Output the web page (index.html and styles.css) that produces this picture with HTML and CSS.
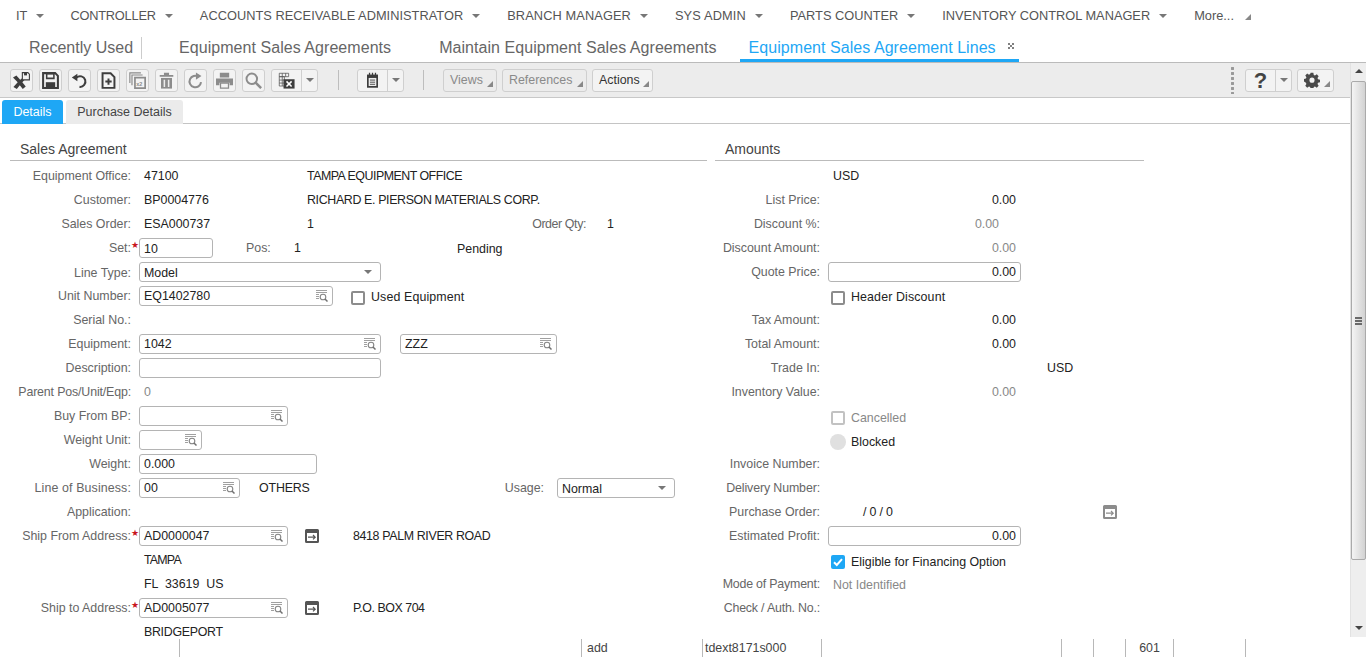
FILE: index.html
```html
<!DOCTYPE html>
<html lang="en">
<head>
<meta charset="utf-8">
<title>Equipment Sales Agreement Lines</title>
<link rel="stylesheet" href="styles.css">
</head>
<body>
<svg class="defs" aria-hidden="true">
  <symbol id="lookup" viewBox="0 0 12 12">
    <path d="M0 .5h11M0 2.500h11M0 4.500h3M0 6.500h3M0 8.500h3" fill="none" stroke="#a0a0a0"/>
    <circle cx="7" cy="7" r="2.800" fill="#fff" stroke="#858585" stroke-width="1.100"/>
    <path d="M9 9l2.500 2.500" stroke="#707070" stroke-width="1.500"/>
  </symbol>
  <symbol id="jump" viewBox="0 0 14 14">
    <path d="M1.500 0h11A1.500 1.500 0 0 1 14 1.500v11a1.500 1.500 0 0 1-1.500 1.500h-11A1.500 1.500 0 0 1 0 12.500v-11A1.500 1.500 0 0 1 1.500 0zM2 4v8h10V4z" fill="currentColor" fill-rule="evenodd"/>
    <path d="M3 8.200h7M8 6L10.200 8.200 8 10.400" fill="none" stroke="currentColor" stroke-width="1.200"/>
  </symbol>
</svg>

<nav class="menu">
  <span class="menu-item it">IT<i class="caret"></i></span>
  <span class="menu-item ctrl">CONTROLLER<i class="caret"></i></span>
  <span class="menu-item accts">ACCOUNTS RECEIVABLE ADMINISTRATOR<i class="caret"></i></span>
  <span class="menu-item branch">BRANCH MANAGER<i class="caret"></i></span>
  <span class="menu-item sys">SYS ADMIN<i class="caret"></i></span>
  <span class="menu-item">PARTS COUNTER<i class="caret"></i></span>
  <span class="menu-item">INVENTORY CONTROL MANAGER<i class="caret"></i></span>
  <span class="menu-item more">More...<i class="corner"></i></span>
</nav>

<div class="tabs">
  <span class="tab recent">Recently Used</span>
  <span class="tab first">Equipment Sales Agreements</span>
  <span class="tab second">Maintain Equipment Sales Agreements</span>
  <span class="tab active">Equipment Sales Agreement Lines<svg class="close" viewBox="0 0 6 6" aria-label="Close"><path d="M0 0h2v2H0zM4 0h2v2H4zM2 2h2v2H2zM0 4h2v2H0zM4 4h2v2H4z" fill="#808080"/></svg></span>
</div>

<div class="toolbar">
  <button class="tb" aria-label="Save and exit"><svg viewBox="0 0 20 20"><path d="M0 6.500L4 4l4.500 5L11 7l2.500 2.500L11 12l4 5-3.500 3-3.500-4.500L4.500 20 .5 17.500 5.500 12z" fill="#3d3d3d"/><path d="M11 .7h6.500l1.800 1.800v6.800H11z" fill="#f3f3f3" stroke="#3d3d3d" stroke-width="1.300"/><path d="M13 .7h3.500v3.300H13z" fill="#3d3d3d"/></svg></button>
  <button class="tb" aria-label="Save"><svg viewBox="0 0 20 20"><path d="M1.300 1.300h14.200l3.200 3.200v14.200H1.300z" fill="none" stroke="#3d3d3d" stroke-width="2.400"/><path d="M5.500 2h8.500v5.500H5.500z" fill="none" stroke="#3d3d3d" stroke-width="1.800"/><path d="M4.500 12h11v6h-11z" fill="#3d3d3d"/></svg></button>
  <button class="tb" aria-label="Undo"><svg viewBox="0 0 20 20"><path d="M6.500 6.500A6.300 6.300 0 1 1 10 17.500" fill="none" stroke="#3d3d3d" stroke-width="2.400"/><path d="M1 6.500L7.500 2v9z" fill="#3d3d3d"/></svg></button>
  <button class="tb" aria-label="New"><svg viewBox="0 0 20 20"><path d="M3 1.500h9.500l4.500 4.500v12.700H3z" fill="none" stroke="#3d3d3d" stroke-width="2.300"/><path d="M10 7.500v7.500M6.300 11.200h7.400" stroke="#3d3d3d" stroke-width="2.300"/></svg></button>
  <button class="tb off" aria-label="Duplicate"><svg viewBox="0 0 20 20"><path d="M1 13V1h13M3.500 15.500V3.500H16" fill="none" stroke="#8c8c8c" stroke-width="1.400"/><path d="M7 6.500h12v12.500H7z" fill="none" stroke="#8c8c8c" stroke-width="2"/><text x="8.500" y="16" class="x2">x2</text></svg></button>
  <button class="tb off" aria-label="Delete"><svg viewBox="0 0 20 20"><path d="M2 3.500h16v2.200H2zM7 1h6v3H7z" fill="#8c8c8c"/><path d="M3.500 7h13v12.500h-13z" fill="#8c8c8c"/><path d="M7.500 9v8.500M12.500 9v8.500" stroke="#ececec" stroke-width="1.800"/></svg></button>
  <button class="tb off" aria-label="Redo"><svg viewBox="0 0 20 20"><path d="M13.500 5.500A6.800 6.800 0 1 0 16.500 12" fill="none" stroke="#8c8c8c" stroke-width="2.400"/><path d="M10.500 .5v8.500l6.500-4.200z" fill="#8c8c8c"/></svg></button>
  <button class="tb off" aria-label="Print"><svg viewBox="0 0 20 20"><path d="M4.500 1h11v5.500h-11zM0 7.500h20v8h-4v-3H4v3H0z" fill="#8c8c8c"/><path d="M5.300 13h9.400v6H5.300z" fill="none" stroke="#8c8c8c" stroke-width="1.500"/></svg></button>
  <button class="tb off" aria-label="Find"><svg viewBox="0 0 20 20"><circle cx="8" cy="8" r="6.200" fill="none" stroke="#8c8c8c" stroke-width="2.300"/><path d="M12.500 12.500l6.500 6.500" stroke="#8c8c8c" stroke-width="3"/></svg></button>
  <span class="split xl">
    <button class="tb main" aria-label="Export"><svg viewBox="0 0 20 20"><path d="M1.500 1.500h11v4h-11zM1.500 5.500h6v11h-6zM1.500 9.500h6M1.500 13h6M5 1.500v15M9 1.500v4" fill="none" stroke="#555" stroke-width=".9"/><path d="M6.500 8.500h13v11h-13z" fill="#3d3d3d"/><path d="M10 11l6 6M16 11l-6 6" stroke="#fff" stroke-width="1.800"/></svg></button>
    <button class="drop" aria-label="Export options"><i class="caret"></i></button>
  </span>
  <i class="sep sep-a"></i>
  <span class="split note">
    <button class="tb main" aria-label="Notes"><svg viewBox="0 0 20 20"><path d="M3.500 3h13v15.500h-13z" fill="#3d3d3d"/><path d="M6.500 1v4M10 1v4M13.500 1v4" stroke="#3d3d3d" stroke-width="1.500"/><path d="M5.500 7h9v9.500h-9z" fill="#ececec"/><path d="M7 9.500h6M7 12h6M7 14.500h6" stroke="#3d3d3d"/></svg></button>
    <button class="drop" aria-label="Notes options"><i class="caret"></i></button>
  </span>
  <i class="sep sep-b"></i>
  <button class="txt views dim">Views<i class="corner"></i></button>
  <button class="txt refs dim">References<i class="corner"></i></button>
  <button class="txt actions">Actions<i class="corner"></i></button>
  <span class="dots"></span>
  <span class="split help">
    <button class="tb main qm">?</button>
    <button class="drop" aria-label="Help options"><i class="caret"></i></button>
  </span>
  <button class="txt gear" aria-label="Settings"><svg viewBox="0 0 20 20"><path fill="#4a4a4a" fill-rule="evenodd" d="M8.300 1h3.400l.5 2.600 1.500.7 2.300-1.400 2.300 2.400-1.400 2.200.6 1.600 2.500.5v3.300l-2.500.6-.6 1.500 1.400 2.300-2.300 2.300-2.300-1.400-1.500.6-.5 2.700H8.300l-.6-2.700-1.500-.6-2.200 1.400-2.400-2.300 1.400-2.300-.6-1.500L0 11.900V8.600l2.400-.5.600-1.600-1.400-2.200L4 1.900l2.200 1.400 1.500-.7zM10 7a3.200 3.200 0 1 0 0 6.400A3.200 3.200 0 0 0 10 7z"/></svg><i class="corner"></i></button>
</div>

<div class="body">
  <div class="page">
    <div class="subtabs">
      <span class="subtab on">Details</span>
      <span class="subtab">Purchase Details</span>
    </div>
    <main class="form">
      <section class="col left">
        <h2>Sales Agreement</h2>
        <div class="row"><label>Equipment Office:</label><span class="v w168">47100</span><span class="ls5">TAMPA EQUIPMENT OFFICE</span></div>
        <div class="row"><label>Customer:</label><span class="v w168">BP0004776</span><span class="ls35">RICHARD E. PIERSON MATERIALS CORP.</span></div>
        <div class="row"><label>Sales Order:</label><span class="v w168">ESA000737</span><span class="w225">1</span><span class="lab-inline">Order Qty:</span><span class="qty">1</span></div>
        <div class="row"><label class="req">Set:</label><span class="in w74 low">10</span><span class="pos">Pos:</span><span class="posv">1</span><span class="pending">Pending</span></div>
        <div class="row"><label class="low-label">Line Type:</label><span class="in w242 sel">Model<i class="caret"></i></span></div>
        <div class="row"><label>Unit Number:</label><span class="in w194 lk">EQ1402780<svg class="lki"><use href="#lookup"/></svg></span><span class="check gap18 drop2"></span><span class="chk-label low-chk">Used Equipment</span></div>
        <div class="row"><label>Serial No.:</label></div>
        <div class="row"><label>Equipment:</label><span class="in w242 lk">1042<svg class="lki"><use href="#lookup"/></svg></span><span class="in w157 lk gap19">ZZZ<svg class="lki"><use href="#lookup"/></svg></span></div>
        <div class="row"><label>Description:</label><span class="in w242"></span></div>
        <div class="row"><label class="tight-p">Parent Pos/Unit/Eqp:</label><span class="v grey">0</span></div>
        <div class="row"><label>Buy From BP:</label><span class="in w149 lk"><svg class="lki"><use href="#lookup"/></svg></span></div>
        <div class="row"><label>Weight Unit:</label><span class="in w63 lk"><svg class="lki"><use href="#lookup"/></svg></span></div>
        <div class="row"><label>Weight:</label><span class="in w178">0.000</span></div>
        <div class="row"><label class="wide-l">Line of Business:</label><span class="in w101 lk">00<svg class="lki"><use href="#lookup"/></svg></span><span class="others">OTHERS</span><span class="lab-usage">Usage:</span><span class="in w118 sel usage">Normal<i class="caret"></i></span></div>
        <div class="row"><label>Application:</label></div>
        <div class="row"><label class="req">Ship From Address:</label><span class="in w149 lk">AD0000047<svg class="lki"><use href="#lookup"/></svg></span><svg class="jump"><use href="#jump"/></svg><span class="addr ls35">8418 PALM RIVER ROAD</span></div>
        <div class="row"><label></label><span class="v tampa">TAMPA</span></div>
        <div class="row"><label></label><span class="v pre">FL  33619  US</span></div>
        <div class="row"><label class="req">Ship to Address:</label><span class="in w149 lk">AD0005077<svg class="lki"><use href="#lookup"/></svg></span><svg class="jump"><use href="#jump"/></svg><span class="addr ls45">P.O. BOX 704</span></div>
        <div class="row"><label></label><span class="v ls3">BRIDGEPORT</span></div>
      </section>
      <section class="col right">
        <h2>Amounts</h2>
        <div class="row"><label></label><span class="v">USD</span></div>
        <div class="row"><label>List Price:</label><span class="num">0.00</span></div>
        <div class="row"><label>Discount %:</label><span class="num grey disc">0.00</span></div>
        <div class="row"><label>Discount Amount:</label><span class="num grey">0.00</span></div>
        <div class="row"><label>Quote Price:</label><span class="in w193 end">0.00</span></div>
        <div class="row"><label></label><span class="check gap3 drop2"></span><span class="chk-label low-chk">Header Discount</span></div>
        <div class="row"><label>Tax Amount:</label><span class="num">0.00</span></div>
        <div class="row"><label>Total Amount:</label><span class="num">0.00</span></div>
        <div class="row"><label>Trade In:</label><span class="usd">USD</span></div>
        <div class="row"><label>Inventory Value:</label><span class="num grey">0.00</span></div>
        <div class="row nudge"><label></label><span class="check gap3 off"></span><span class="chk-label grey">Cancelled</span></div>
        <div class="row nudge"><label></label><span class="dot"></span><span class="chk-label">Blocked</span></div>
        <div class="row"><label>Invoice Number:</label></div>
        <div class="row"><label class="tight-s">Delivery Number:</label></div>
        <div class="row"><label>Purchase Order:</label><span class="po">/ 0 / 0</span><svg class="jump po-jump"><use href="#jump"/></svg></div>
        <div class="row"><label>Estimated Profit:</label><span class="in w193 end">0.00</span></div>
        <div class="row nudge"><label></label><span class="check gap3 on"><svg viewBox="0 0 14 14"><path d="M3 7.200l2.800 2.800L11 4.200" fill="none" stroke="#fff" stroke-width="2"/></svg></span><span class="chk-label">Eligible for Financing Option</span></div>
        <div class="row"><label class="tight-l">Mode of Payment:</label><span class="v grey nudge-t">Not Identified</span></div>
        <div class="row"><label class="tight-l">Check / Auth. No.:</label></div>
      </section>
    </main>
  </div>
  <div class="scrollbar">
    <i class="arrow up"></i>
    <div class="thumb"><i class="grip"></i></div>
    <i class="arrow down"></i>
  </div>
</div>

<footer class="status">
  <span class="cell s180"></span>
  <span class="cell s402"></span>
  <span class="cell s121">add</span>
  <span class="cell s119">tdext8171s000</span>
  <span class="cell s240"></span>
  <span class="cell s32"></span>
  <span class="cell s32"></span>
  <span class="cell s48 center">601</span>
  <span class="cell s72"></span>
  <span class="cell"></span>
</footer>
</body>
</html>
```
FILE: styles.css
```css
* { box-sizing: border-box; }
html, body { margin: 0; height: 100%; }
body {
  display: flex;
  flex-direction: column;
  height: 657px;
  overflow: hidden;
  background: #fff;
  color: #222;
  font: 12.4px/16px "Liberation Sans", Arial, sans-serif;
}
.defs { position: absolute; width: 0; height: 0; }
i { display: block; font-style: normal; }

.caret {
  width: 0; height: 0;
  border-left: 4px solid transparent;
  border-right: 4px solid transparent;
  border-top: 4px solid #777;
}
.corner {
  width: 0; height: 0;
  border-left: 6px solid transparent;
  border-bottom: 6px solid #888;
}

/* top menu */
.menu { display: flex; height: 31px; padding-left: 16px; align-items: center; flex: none; }
.menu-item { display: flex; align-items: center; margin-right: 27px; color: #555; font-size: 12.8px; white-space: nowrap; }
.menu-item .caret { margin-left: 9px; }
.it { margin-right: 26px; }
.ctrl { letter-spacing: -.2px; }
.accts { letter-spacing: .03px; }
.branch { letter-spacing: .1px; }
.sys { letter-spacing: .15px; }
.menu-item.more { margin-right: 0; }
.menu-item.more .corner { margin-left: 11px; margin-top: 3px; }

/* page tabs */
.tabs { display: flex; height: 31px; flex: none; font-size: 16px; color: #666; letter-spacing: .05px; }
.tab { display: flex; align-items: center; height: 31px; padding-top: 2px; white-space: nowrap; }
.recent { margin-left: 29px; padding: 0 8px 0 0; height: 22px; margin-top: 6px; border-right: 1px solid #ccc; letter-spacing: 0; }
.first { margin-left: 37px; }
.second { margin-left: 48px; }
.active { margin-left: 23px; width: 279px; padding: 5px 0 0 9px; color: #1ea7f5; border-bottom: 3px solid #1ea7f5; position: relative; }
.close { position: absolute; right: 5px; top: 12px; width: 6px; height: 6px; }

/* toolbar */
.toolbar {
  display: flex; align-items: center; flex: none;
  height: 36px; padding: 0 0 0 10px;
  background: #ececec;
  border-top: 1px solid #bbb;
  border-bottom: 1px solid #c8c8c8;
}
button { font: inherit; color: inherit; padding: 0; background: none; cursor: default; }
.tb {
  display: flex; align-items: center; justify-content: center;
  width: 23px; height: 23px; margin-right: 6px;
  border: 1px solid #cfcfcf; border-radius: 3px;
  background: #f3f3f3;
}
.tb svg { width: 17px; height: 17px; }
.x2 { font: bold 6.500px "Liberation Sans", sans-serif; fill: #8c8c8c; }
.split { display: flex; height: 23px; border: 1px solid #cfcfcf; border-radius: 3px; background: #f3f3f3; }
.split .main { border: 0; border-right: 1px solid #cfcfcf; margin: 0; height: 21px; border-radius: 0; background: none; }
.split .drop { width: 15px; border: 0; display: flex; align-items: center; justify-content: center; }
.xl .main { width: 30px; }
.note .main { width: 30px; }
.sep { width: 1px; height: 20px; background: #bdbdbd; }
.sep-a { margin: 0 18px 0 20px; }
.sep-b { margin: 0 19px; }
.txt {
  display: flex; align-items: center; position: relative;
  height: 23px; margin-right: 5px; padding-left: 6px;
  border: 1px solid #cfcfcf; border-radius: 3px;
  background: #f3f3f3; font-size: 12.4px; color: #333;
}
.txt .corner { position: absolute; right: 3px; bottom: 4px; }
.dim { color: #8a8a8a; background: #ececec; }
.views { width: 54px; }
.refs { width: 85px; }
.actions { width: 61px; margin-right: 0; }
.dots { width: 3px; height: 28px; margin-left: 578px; background: radial-gradient(circle, #999 1.400px, transparent 1.600px) 0 0 / 3px 5px repeat-y; }
.help { margin-left: 11px; width: 47px; }
.help .main { width: 30px; }
.qm { font: bold 22px/21px "Liberation Sans", sans-serif; color: #444; }
.help .drop { width: 15px; }
.gear { width: 37px; margin: 0 0 0 5px; }
.gear svg { width: 16px; height: 16px; }

/* body */
.body { display: flex; flex: 1; min-height: 0; }
.page { flex: 1; min-width: 0; }
.subtabs { display: flex; gap: 3px; height: 26px; padding: 2px 0 0 2px; border-bottom: 1px solid #c4c4c4; }
.subtab { display: flex; align-items: center; justify-content: center; width: 117px; height: 24px; background: #ebebeb; border-radius: 3px 3px 0 0; color: #444; font-size: 12.500px; }
.subtab.on { width: 61px; background: #1ea7f5; color: #fff; }
.form { display: flex; gap: 8px; padding: 13px 0 0 10px; }
.col h2 { margin: 0 0 3px; height: 24px; padding: 4px 0 0 10px; font: 400 14px/17px "Liberation Sans", sans-serif; color: #444; border-bottom: 1px solid #bbb; }
.left { width: 697px; }
.right { width: 429px; }
.row { display: flex; align-items: center; height: 24px; line-height: 10px; white-space: nowrap; }
label { flex: none; width: 121px; margin-right: 8px; text-align: right; color: #666; position: relative; }
.right label { width: 105px; margin-right: 8px; }
.req::after { content: "★"; position: absolute; right: -8px; top: -3px; color: #c8141e; font-size: 9px; line-height: 10px; }
.tight-l { letter-spacing: -.2px; }
.tight-p { letter-spacing: -.15px; }
.tight-s { letter-spacing: -.12px; }
.wide-l { letter-spacing: .12px; }
.low-label { position: relative; top: 1px; }
.v { padding-left: 5px; }
.ls5 { letter-spacing: -.5px; }
.ls45 { letter-spacing: -.45px; }
.ls35 { letter-spacing: -.35px; }
.ls3 { letter-spacing: -.3px; }
.tampa { letter-spacing: -.8px; }
.w168 { width: 168px; }
.w225 { width: 225px; }
.grey { color: #888; }
.pre { white-space: pre; }
.in {
  display: flex; align-items: center; position: relative; flex: none;
  height: 20px; padding: 0 4px;
  border: 1px solid #b4b4b4; border-radius: 3px; background: #fff;
}
.low { padding-top: 1px; }
.w74 { width: 74px; } .w242 { width: 242px; } .w194 { width: 194px; } .w157 { width: 157px; }
.w149 { width: 149px; } .w63 { width: 63px; } .w178 { width: 178px; } .w101 { width: 101px; }
.w118 { width: 118px; } .w193 { width: 193px; }
.sel { padding-top: 2px; }
.sel .caret { position: absolute; right: 8px; top: 7px; }
.lki { position: absolute; right: 4px; top: 3px; width: 12px; height: 12px; }
.end { justify-content: flex-end; }
.lab-inline { color: #666; width: 54px; text-align: right; letter-spacing: -.4px; }
.qty { margin-left: 21px; }
.pos { color: #666; margin-left: 33px; width: 48px; }
.posv { width: 163px; }
.pending { position: relative; top: 1px; }
.gap18 { margin-left: 18px; }
.gap19 { margin-left: 19px; }
.gap3 { margin-left: 3px; }
.drop2 { position: relative; top: 2px; }
.low-chk { position: relative; top: 1px; letter-spacing: .13px; }
.check { flex: none; display: block; width: 14px; height: 14px; border: 2px solid #8c8c8c; border-radius: 2px; background: #fff; }
.check.off { border-color: #c2c2c2; }
.check.on { border: 0; background: #1ea7f5; }
.check svg { display: block; width: 14px; height: 14px; }
.chk-label { margin-left: 6px; }
.dot { flex: none; width: 16px; height: 16px; margin-left: 2px; border-radius: 50%; background: #e0e0e0; }
.dot + .chk-label { margin-left: 5px; }
.nudge { position: relative; top: 2px; }
.nudge-t { position: relative; top: 1px; }
.others { margin-left: 19px; width: 245px; letter-spacing: -.15px; }
.lab-usage { color: #666; width: 41px; text-align: right; margin-right: 13px; margin-left: -1px; }
.jump { flex: none; width: 14px; height: 14px; margin-left: 17px; color: #555; }
.addr { margin-left: 34px; }
.num { width: 188px; text-align: right; }
.disc { width: 171px; }
.usd { margin-left: 219px; }
.po { margin-left: 35px; width: 240px; letter-spacing: -.2px; }
.po-jump { margin-left: 0; color: #8c8c8c; }

/* scrollbar */
.scrollbar {
  position: absolute; right: 0; top: 63px; width: 16px; height: 574px;
  background: #eee; border-left: 1px solid #e2e2e2;
  display: flex; flex-direction: column; align-items: center;
}
.arrow { width: 0; height: 0; border-left: 4px solid transparent; border-right: 4px solid transparent; }
.up { margin-top: 6px; border-bottom: 4px solid #444; }
.down { margin-top: 66px; border-top: 4px solid #444; }
.thumb {
  display: flex; align-items: center; justify-content: center;
  width: 15px; height: 479px; margin-top: 8px;
  border: 1px solid #aaa; border-radius: 2px;
  background: linear-gradient(90deg, #f4f4f4, #d2d2d2);
}
.grip { width: 7px; height: 8px; background: repeating-linear-gradient(#6a6a6a 0 2px, transparent 2px 3px); }

/* status bar */
.status { display: flex; flex: none; height: 20px; padding-top: 2px; }
.cell { display: flex; align-items: center; height: 18px; padding-left: 5px; border-right: 1px solid #b8b8b8; color: #444; }
.cell:last-child { border-right: 0; }
.s180 { width: 180px; }
.s402 { width: 402px; }
.s121 { width: 121px; }
.s119 { width: 119px; padding-left: 2px; }
.s240 { width: 240px; }
.s32 { width: 32px; }
.s48 { width: 48px; }
.s72 { width: 72px; }
.center { justify-content: center; padding-left: 0; }
```
